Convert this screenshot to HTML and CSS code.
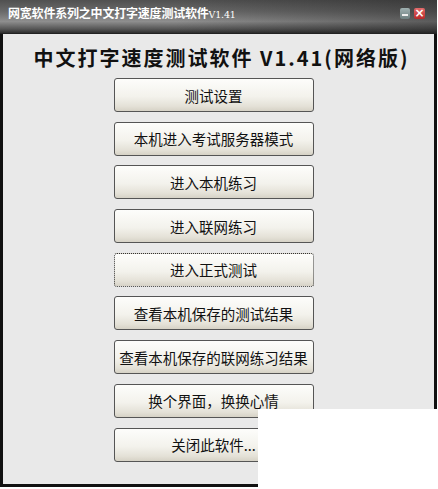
FILE: index.html
```html
<!DOCTYPE html>
<html lang="zh-CN">

<head>
    <meta charset="UTF-8">
    <title>中文打字速度测试软件</title>
    <link rel="stylesheet" href="styles.css">
</head>

<body>
    <div class="window">
        <!-- 标题栏 -->
        <div class="title-bar">
            <span class="title-text">网宽软件系列之中文打字速度测试软件<small>V1.41</small></span>
            <div class="title-btns">
                <span class="btn-min"></span>
                <span class="btn-close">×</span>
            </div>
        </div>
        <!-- 主菜单 -->
        <div class="content">
            <h1 class="heading">中文打字速度测试软件 V1.41(网络版)</h1>
            <div class="menu">
                <button class="menu-btn">测试设置</button>
                <button class="menu-btn">本机进入考试服务器模式</button>
                <button class="menu-btn">进入本机练习</button>
                <button class="menu-btn">进入联网练习</button>
                <button class="menu-btn focused">进入正式测试</button>
                <button class="menu-btn">查看本机保存的测试结果</button>
                <button class="menu-btn">查看本机保存的联网练习结果</button>
                <button class="menu-btn">换个界面，换换心情</button>
                <button class="menu-btn">关闭此软件...</button>
            </div>
        </div>
    </div>
    <div class="blank-corner"></div>
</body>

</html>
```

FILE: styles.css
```css
body {
    margin: 0;
    padding: 0;
    background-color: #fff;
    font-family: "Noto Sans CJK SC", "Noto Sans", sans-serif;
    position: relative;
    width: 438px;
    height: 489px;
    overflow: hidden;
}

/* 窗口外框 */
.window {
    width: 431px;
    height: 484px;
    border: 3px solid #111;
    border-top: none;
    background-color: #e9e9e9;
    display: flex;
    flex-direction: column;
}

/* 标题栏 */
.title-bar {
    height: 34px;
    margin: 0 -3px;
    display: flex;
    justify-content: space-between;
    align-items: flex-start;
    padding: 4px 8px 0 8px;
    box-sizing: border-box;
    border-bottom: 1px solid #222;
    background:
        linear-gradient(to right, rgba(0, 0, 0, 0) 0%, rgba(0, 0, 0, 0) 40%, rgba(30, 30, 30, 0.45) 100%),
        linear-gradient(to bottom, #505050 0%, #6a6a6a 35%, #8e8e8e 65%, #555 88%, #2e2e2e 100%);
}

.title-text {
    color: #fff;
    font-size: 12px;
    font-weight: bold;
    line-height: 18px;
    letter-spacing: -0.2px;
}

.title-text small {
    font-size: 9.5px;
    font-weight: normal;
    font-family: "DejaVu Serif", serif;
}

.title-btns {
    display: flex;
    gap: 4px;
    margin-top: 4px;
    margin-right: 4px;
}

.btn-min,
.btn-close {
    display: block;
    width: 10px;
    height: 11px;
    border-radius: 2px;
}

.btn-min {
    background: linear-gradient(#9fb0b0, #6d7f80);
    position: relative;
}

.btn-min::after {
    content: "";
    position: absolute;
    left: 2px;
    right: 2px;
    bottom: 3px;
    height: 2px;
    background: #eee;
}

.btn-close {
    width: 11px;
    background: linear-gradient(#e46a6a, #b82828);
    color: #fff;
    font-size: 12px;
    line-height: 10px;
    text-align: center;
    font-family: "DejaVu Sans", sans-serif;
    font-weight: bold;
}

/* 内容区域 */
.content {
    flex: 1;
    padding-top: 9px;
}

.heading {
    margin: 0 0 6px 0;
    height: 29px;
    font-size: 20px;
    line-height: 29px;
    font-weight: bold;
    letter-spacing: 2px;
    text-align: center;
    color: #111;
    padding-left: 6px;
}

.menu {
    display: flex;
    flex-direction: column;
    align-items: center;
    gap: 9.7px;
    padding-right: 10px;
}

.menu-btn {
    width: 200px;
    height: 34px;
    border: 1px solid #555;
    border-radius: 3px;
    background: linear-gradient(to bottom, #fdfdfb 0%, #f3f2ec 55%, #e4e1d7 85%, #d6d2c6 100%);
    font-family: "Noto Sans CJK SC", sans-serif;
    font-size: 14.5px;
    color: #111;
    padding: 0;
}

/* 当前获得焦点的按钮 */
.menu-btn.focused {
    border: 1px dotted #333;
}

/* 右下角空白区 */
.blank-corner {
    position: absolute;
    left: 258px;
    top: 409px;
    right: 0;
    bottom: 0;
    background-color: #fff;
}
```
